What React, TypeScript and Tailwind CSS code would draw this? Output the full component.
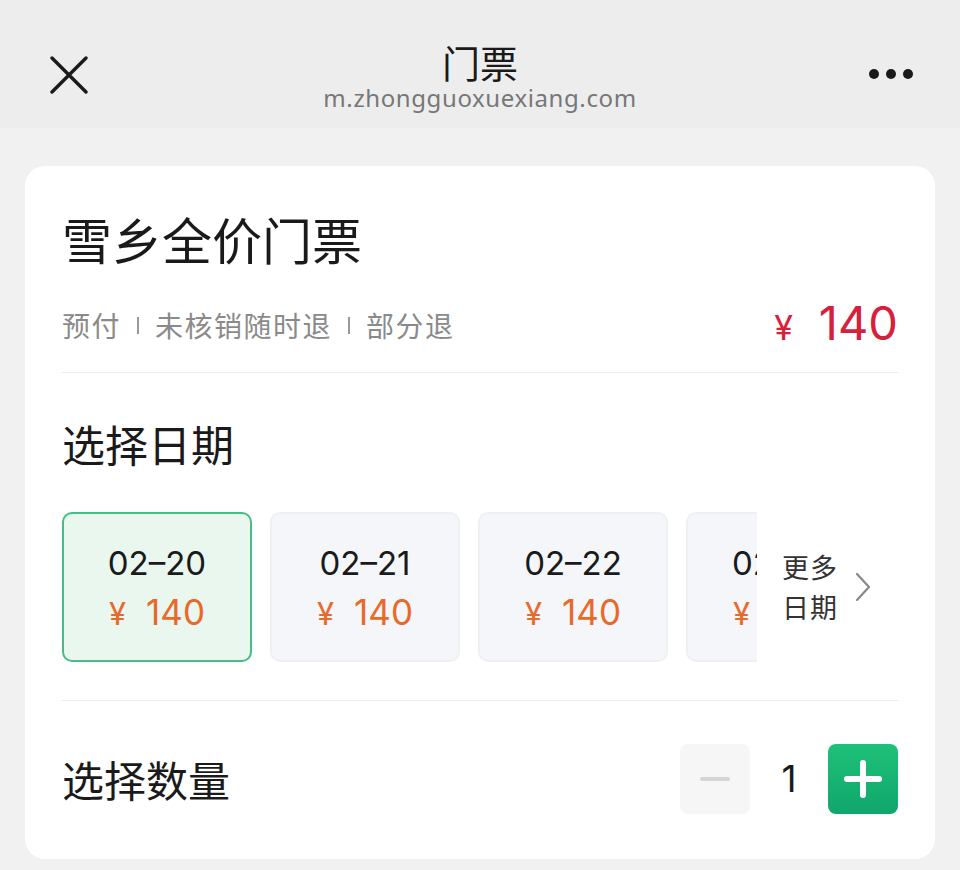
import React from "react";

const cjk = { fontFamily: '"Noto Sans CJK SC", "Noto Sans", sans-serif' };
const num = { fontFamily: 'Inter, "Noto Sans CJK SC", sans-serif' };

function DateCard({ date, selected }: { date: string; selected?: boolean }) {
  return (
    <div
      className={
        "flex h-[150px] w-[190px] shrink-0 flex-col items-center justify-center rounded-[10px] border-2 pt-[6px] " +
        (selected ? "border-[#45bd85] bg-[#e9f7ef]" : "border-[#eef0f3] bg-[#f5f6f9]")
      }
    >
      <div className="text-[33px] leading-[42px] text-[#1a1a1a]" style={num}>
        {date}
      </div>
      <div className="mt-[6px] flex items-baseline text-[#e8692a]" style={num}>
        <span className="text-[31px]">¥</span>
        <span className="ml-[20px] text-[35px] leading-[44px]">140</span>
      </div>
    </div>
  );
}

export default function App() {
  return (
    <div className="h-[870px] w-[960px] overflow-hidden bg-[#f1f1f1]" style={cjk}>
      {/* header */}
      <div className="relative h-[126px] bg-[#ededed] shadow-[0_1px_3px_rgba(0,0,0,0.04)]">
        <div className="absolute left-[50px] top-[56px]">
          <svg width="38" height="38" viewBox="0 0 38 38">
            <path d="M2 2 L36 36 M36 2 L2 36" stroke="#1a1a1a" strokeWidth="3.4" strokeLinecap="round" />
          </svg>
        </div>
        <div className="flex w-full flex-col items-center pt-[42px]">
          <div className="text-[38px] leading-[40px] text-[#1a1a1a]">门票</div>
          <div
            className="mt-[2px] text-[24px] leading-[28px] tracking-[0.6px] text-[#777]"
            style={{ fontFamily: '"Noto Sans", sans-serif' }}
          >
            m.zhongguoxuexiang.com
          </div>
        </div>
        <div className="absolute left-[869px] top-[69px] flex gap-[7px]">
          <span className="h-[10px] w-[10px] rounded-full bg-[#1a1a1a]" />
          <span className="h-[10px] w-[10px] rounded-full bg-[#1a1a1a]" />
          <span className="h-[10px] w-[10px] rounded-full bg-[#1a1a1a]" />
        </div>
      </div>

      {/* card */}
      <div className="mx-[25px] mt-[40px] h-[693px] rounded-[20px] bg-white px-[37px] pt-[40px]">
        <div className="text-[50px] leading-[64px] text-[#1a1a1a]">雪乡全价门票</div>
        <div className="mt-[30px] flex h-[50px] items-center justify-between">
          <div className="flex items-center text-[28px] leading-[40px] tracking-[1.5px] text-[#8a8a8a]">
            <span>预付</span>
            <span className="mx-[16px] h-[17px] w-[2px] bg-[#999]" />
            <span>未核销随时退</span>
            <span className="mx-[16px] h-[17px] w-[2px] bg-[#999]" />
            <span>部分退</span>
          </div>
          <div className="flex items-baseline text-[#d7203c]" style={num}>
            <span className="text-[34px]">¥</span>
            <span className="ml-[26px] text-[47px] leading-[50px]">140</span>
          </div>
        </div>
        <div className="mt-[22px] h-px bg-[#ececec]" />

        <div className="mt-[44px] text-[43px] leading-[52px] text-[#1a1a1a]">选择日期</div>

        <div className="mt-[43px] flex items-center">
          <div className="flex w-[695px] gap-[18px] overflow-hidden">
            <DateCard date="02–20" selected />
            <DateCard date="02–21" />
            <DateCard date="02–22" />
            <DateCard date="02–23" />
          </div>
          <div className="ml-[25px] flex flex-col text-[27px] leading-[40px] tracking-[1px] text-[#333]">
            <span>更多</span>
            <span>日期</span>
          </div>
          <svg className="ml-[16px]" width="18" height="32" viewBox="0 0 18 32">
            <path d="M3 3 L15 16 L3 29" stroke="#888" strokeWidth="2.2" fill="none" strokeLinecap="round" strokeLinejoin="round" />
          </svg>
        </div>

        <div className="mt-[38px] h-px bg-[#ececec]" />

        <div className="mt-[43px] flex items-center justify-between">
          <div className="text-[42px] leading-[52px] text-[#1a1a1a]">选择数量</div>
          <div className="flex items-center">
            <div className="flex h-[70px] w-[70px] items-center justify-center rounded-[8px] bg-[#f6f6f6]">
              <span className="h-[4px] w-[30px] rounded-full bg-[#d5d5d5]" />
            </div>
            <div className="w-[78px] text-center text-[37px] text-[#1a1a1a]" style={num}>1</div>
            <div className="relative flex h-[70px] w-[70px] items-center justify-center rounded-[8px] bg-gradient-to-b from-[#1ec179] to-[#10a66c]">
              <span className="absolute h-[6px] w-[38px] rounded-full bg-white" />
              <span className="absolute h-[38px] w-[6px] rounded-full bg-white" />
            </div>
          </div>
        </div>
      </div>
    </div>
  );
}
